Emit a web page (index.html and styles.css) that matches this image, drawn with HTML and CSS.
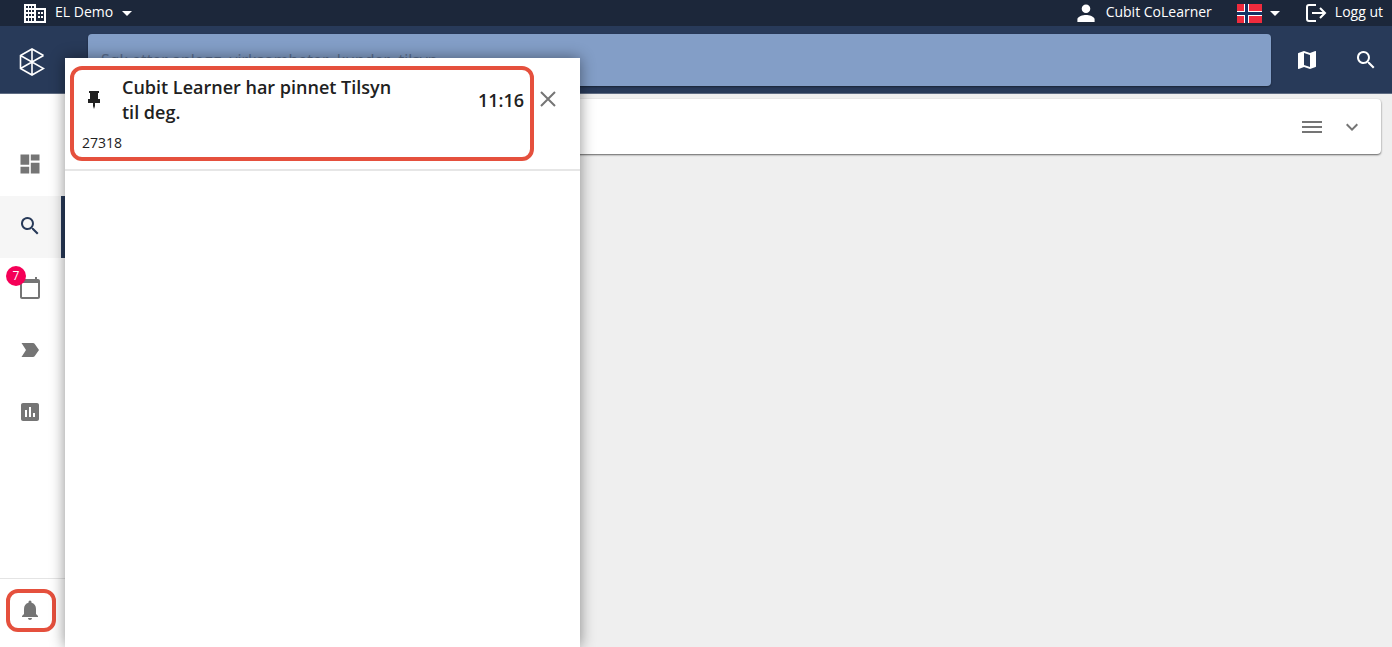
FILE: index.html
```html
<!DOCTYPE html>
<html lang="no">
<head>
    <meta charset="UTF-8">
    <meta name="viewport" content="width=device-width, initial-scale=1.0">
    <title>EL Demo</title>
    <link rel="stylesheet" href="styles.css">
</head>
<body>
    <div class="topbar">
        <button class="top-button company" type="button">
            <svg class="company-icon" viewBox="0 0 22 20"><path fill-rule="evenodd" d="M0 1h12v4h10v15H0zM2 3v2h2V3zM5 3v2h2V3zM8 3v2h2V3zM2 7v2h2V7zM5 7v2h2V7zM8 7v2h2V7zM2 11v2h2v-2zM5 11v2h2v-2zM8 11v2h2v-2zM2 15v3h2v-3zM5 15v3h2v-3zM8 15v3h2v-3zM12 7v11h8V7zM14 9h2v2h-2zM17 9h2v2h-2zM14 13h2v2h-2zM17 13h2v2h-2z"/></svg>
            <span>EL Demo</span>
            <svg class="caret" viewBox="0 0 10 5"><path d="M0 0h10L5 5z"/></svg>
        </button>
        <div class="top-right">
            <button class="top-button user" type="button">
                <svg class="icon" viewBox="0 0 24 24"><path d="M12 12c2.400 0 4.300-1.900 4.300-4.300S14.400 3.400 12 3.400 7.700 5.300 7.700 7.700 9.600 12 12 12zm0 2c-2.900 0-8.600 1.400-8.600 4.300V21h17.200v-2.700c0-2.900-5.700-4.300-8.600-4.300z"/></svg>
                <span>Cubit CoLearner</span>
            </button>
            <button class="top-button language" type="button" aria-label="Norsk">
                <svg class="flag" viewBox="0 0 25 19"><path fill="#ef2b3d" d="M0 0h25v19H0z"/><path fill="#fff" d="M7 0h5v19H7z"/><path fill="#fff" d="M0 7h25v5H0z"/><path fill="#143264" d="M8 0h3v19H8z"/><path fill="#143264" d="M0 8h25v3H0z"/></svg>
                <svg class="caret" viewBox="0 0 10 5"><path d="M0 0h10L5 5z"/></svg>
            </button>
            <button class="top-button logout" type="button">
                <svg class="logout-icon" viewBox="0 0 22 20" fill="none" stroke="currentColor" stroke-width="2"><path d="M11 2H4Q2 2 2 4v12q0 2 2 2h7M7 10h13M15 5l5 5-5 5"/></svg>
                <span>Logg ut</span>
            </button>
        </div>
    </div>

    <header class="header">
        <a class="logo" href="#" aria-label="Cubit">
            <svg viewBox="0 0 26 28" fill="none" stroke="currentColor" stroke-width="1.600"><path d="M24.500 7.500 13 1 1.500 7.500v13L13 27l11.500-6.500L1.500 7.500M24.500 7.500l-23 13M13 1v26"/></svg>
        </a>
        <input class="search" type="text" aria-label="Søk" placeholder="Søk etter anlegg, virksomheter, kunder, tilsyn...">
        <button class="header-button" type="button" aria-label="Kart">
            <svg class="icon" viewBox="0 0 24 24"><path d="M20.500 3l-.2 0L15 5.100 9 3 3.400 4.900c-.2.100-.4.300-.4.500v15.100c0 .3.200.5.500.5l.2 0L9 18.900l6 2.100 5.600-1.900c.2-.1.400-.3.400-.5V3.500c0-.3-.2-.5-.5-.5zM15 19l-6-2.100V5l6 2.100V19z"/></svg>
        </button>
        <button class="header-button" type="button" aria-label="Søk">
            <svg class="icon" viewBox="0 0 24 24"><path d="M15.500 14h-.8l-.3-.3A6.500 6.500 0 1 0 13.700 14.400l.3.300v.8l5 5 1.500-1.500zM9.500 14a4.500 4.500 0 1 1 0-9 4.500 4.500 0 0 1 0 9z"/></svg>
        </button>
    </header>

    <div class="page">
        <nav class="sidebar">
            <a class="nav-item" href="#" aria-label="Oversikt">
                <svg class="icon" viewBox="0 0 24 24"><path d="M2.500 2.500h8.700v10.200H2.500zM12.800 2.500h8.700v6h-8.700zM2.500 14.800h8.700v6.700H2.500zM12.800 10.700h8.700v10.800h-8.700z"/></svg>
            </a>
            <a class="nav-item active" href="#" aria-label="Søk">
                <svg class="icon" viewBox="0 0 24 24"><path d="M15.500 14h-.8l-.3-.3A6.500 6.500 0 1 0 13.700 14.400l.3.300v.8l5 5 1.500-1.500zM9.500 14a4.500 4.500 0 1 1 0-9 4.500 4.500 0 0 1 0 9z"/></svg>
            </a>
            <a class="nav-item" href="#" aria-label="Kalender">
                <svg class="icon" viewBox="0 0 24 24"><path d="M20 3h-1V1h-2v2H7V1H5v2H4c-1.100 0-2 .9-2 2v16c0 1.100.9 2 2 2h16c1.100 0 2-.9 2-2V5c0-1.100-.9-2-2-2zm0 18H4V7h16v14z"/></svg>
                <span class="badge">7</span>
            </a>
            <a class="nav-item" href="#" aria-label="Etiketter">
                <svg class="icon" viewBox="0 0 24 24"><path d="M3.500 19H15c.7 0 1.300-.3 1.600-.8L21 12l-4.400-6.200c-.3-.5-.9-.8-1.600-.8H3.500L8 12z"/></svg>
            </a>
            <a class="nav-item" href="#" aria-label="Rapporter">
                <svg class="icon" viewBox="0 0 24 24"><path d="M19 3H5c-1.100 0-2 .9-2 2v14c0 1.100.9 2 2 2h14c1.100 0 2-.9 2-2V5c0-1.100-.9-2-2-2zM9 17H7v-7h2v7zm4 0h-2V7h2v10zm4 0h-2v-4h2v4z"/></svg>
            </a>
            <div class="nav-footer">
                <button class="bell marked" type="button" aria-label="Varsler">
                    <svg class="icon" viewBox="0 0 24 24"><path d="M12 22c1.100 0 2-.9 2-2h-4c0 1.100.9 2 2 2zm6-6v-5c0-3.100-1.600-5.600-4.500-6.300V4a1.500 1.500 0 0 0-3 0v.7C7.600 5.400 6 7.900 6 11v5l-2 2v1h16v-1z"/></svg>
                </button>
            </div>
        </nav>
        <main class="content">
            <div class="card">
                <button class="card-button" type="button" aria-label="Meny">
                    <svg class="icon" viewBox="0 0 24 24" fill="none" stroke="currentColor" stroke-width="2"><path d="M2 7h20M2 12h20M2 17h20"/></svg>
                </button>
                <button class="card-button" type="button" aria-label="Utvid">
                    <svg class="icon" viewBox="0 0 24 24"><path d="M16.600 8.600 12 13.200 7.400 8.600 6 10l6 6 6-6z"/></svg>
                </button>
            </div>
        </main>
    </div>

    <aside class="panel">
        <div class="notification">
            <div class="notification-body marked">
                <div class="notification-head">
                    <svg class="pin" viewBox="0 0 12 18"><path d="M1 0h10v2h-1v6h2v4H7v3l-1 3-1-3v-3H0V8h2V2H1z"/></svg>
                    <h2 class="title">Cubit Learner har pinnet Tilsyn til deg.</h2>
                    <time class="time">11:16</time>
                </div>
                <p class="number">27318</p>
            </div>
            <button class="close" type="button" aria-label="Lukk">
                <svg viewBox="0 0 16 16" fill="none" stroke="currentColor" stroke-width="2"><path d="M1 1l14 14M15 1 1 15"/></svg>
            </button>
        </div>
    </aside>
</body>
</html>
```
FILE: styles.css
```css
* {
    box-sizing: border-box;
    margin: 0;
    padding: 0;
}

:root {
    --top-color: #1c273a;
    --header-color: #283a59;
    --search-color: #839ec7;
    --mark-color: #e5503d;
    --icon-color: #757575;
}

body {
    display: flex;
    flex-direction: column;
    height: 100vh;
    overflow: hidden;
    background-color: #efefef;
    color: #212121;
    font-family: "Open Sans", "Noto Sans", sans-serif;
    font-size: 14px;
}

button {
    border: 0;
    background: none;
    color: inherit;
    font: inherit;
    cursor: pointer;
}

a {
    color: inherit;
}

svg {
    display: block;
    fill: currentColor;
    flex: none;
}

svg[fill="none"] {
    fill: none;
}

.icon {
    width: 24px;
    height: 24px;
}

.topbar {
    display: flex;
    flex: none;
    justify-content: space-between;
    height: 26px;
    padding: 0 9px 0 24px;
    background-color: var(--top-color);
    color: white;
}

.top-right {
    display: flex;
    gap: 25px;
}

.top-button {
    display: flex;
    align-items: center;
    gap: 8px;
    line-height: 24px;
}

.top-button span {
    padding-bottom: 2px;
}

.company-icon {
    width: 22px;
    height: 20px;
}

.company {
    gap: 9px;
}

.caret {
    width: 10px;
    height: 5px;
}

.flag {
    width: 25px;
    height: 19px;
}

.logout-icon {
    width: 22px;
    height: 20px;
}

.header {
    display: flex;
    flex: none;
    align-items: center;
    height: 68px;
    padding-right: 4px;
    background-color: var(--header-color);
    border-bottom: 1px solid #5f6c83;
    color: white;
}

.logo {
    display: flex;
    justify-content: center;
    width: 64px;
    margin-right: 24px;
    padding-top: 4px;
    color: white;
}

.logo svg {
    width: 26px;
    height: 28px;
}

.search {
    flex: 1;
    min-width: 0;
    height: 52px;
    margin-right: 14px;
    padding: 0 13px;
    border: 0;
    border-radius: 4px;
    background-color: var(--search-color);
    box-shadow: 0 1px 2px rgba(0, 0, 0, 0.4);
    color: #212121;
    font: inherit;
    font-size: 16px;
}

.search::placeholder {
    color: #5a6f90;
}

.header-button {
    display: flex;
    justify-content: center;
    width: 44px;
}

.header-button + .header-button {
    margin-left: 15px;
}

.page {
    display: flex;
    flex: 1;
    min-height: 0;
}

.sidebar {
    display: flex;
    flex: none;
    flex-direction: column;
    width: 65px;
    padding-top: 40px;
    background-color: white;
    color: var(--icon-color);
}

.nav-item {
    position: relative;
    display: flex;
    flex: none;
    align-items: center;
    justify-content: center;
    height: 62px;
    padding: 0 5px 2px 0;
}

.nav-item.active {
    padding-right: 1px;
    border-right: 4px solid var(--header-color);
    background-color: #f6f6f6;
    color: var(--header-color);
}

.badge {
    position: absolute;
    top: 8px;
    left: 6px;
    width: 20px;
    height: 20px;
    border-radius: 50%;
    background-color: #f50057;
    color: white;
    font-size: 12px;
    line-height: 20px;
    text-align: center;
}

.nav-footer {
    margin-top: auto;
    padding: 10px 6px 15px;
    border-top: 1px solid #e4e4e4;
}

.bell {
    display: flex;
    align-items: center;
    justify-content: center;
    width: 50px;
    height: 43px;
    padding: 0 2px 2px 0;
}

.marked {
    border: 4px solid var(--mark-color);
    border-radius: 12px;
}

.content {
    flex: 1;
    padding: 5px 11px 0 7px;
}

.card {
    display: flex;
    align-items: center;
    justify-content: flex-end;
    gap: 16px;
    height: 55px;
    padding-right: 17px;
    border-radius: 4px;
    background-color: white;
    box-shadow: 0 1px 2px rgba(0, 0, 0, 0.6);
    color: var(--icon-color);
}

.panel {
    position: absolute;
    top: 58px;
    bottom: 0;
    left: 65px;
    width: 515px;
    background-color: white;
    box-shadow: 0 0 14px rgba(0, 0, 0, 0.45);
}

.notification {
    display: flex;
    align-items: flex-start;
    padding: 8px 24px 8px 5px;
    border-bottom: 2px solid #e6e6e6;
}

.notification-body {
    flex: 1;
    padding: 5px 6px 4px 8px;
}

.notification-head {
    display: flex;
    align-items: center;
}

.pin {
    width: 12px;
    height: 18px;
    margin: 0 22px 0 6px;
}

.title {
    width: 280px;
    font-size: 18px;
    font-weight: 600;
    line-height: 25px;
}

.time {
    margin-left: auto;
    font-size: 18px;
    font-weight: 600;
}

.number {
    margin-top: 8px;
    font-size: 14px;
    line-height: 20px;
}

.close {
    margin: 25px 0 0 6px;
    color: var(--icon-color);
}

.close svg {
    width: 16px;
    height: 16px;
}
```
